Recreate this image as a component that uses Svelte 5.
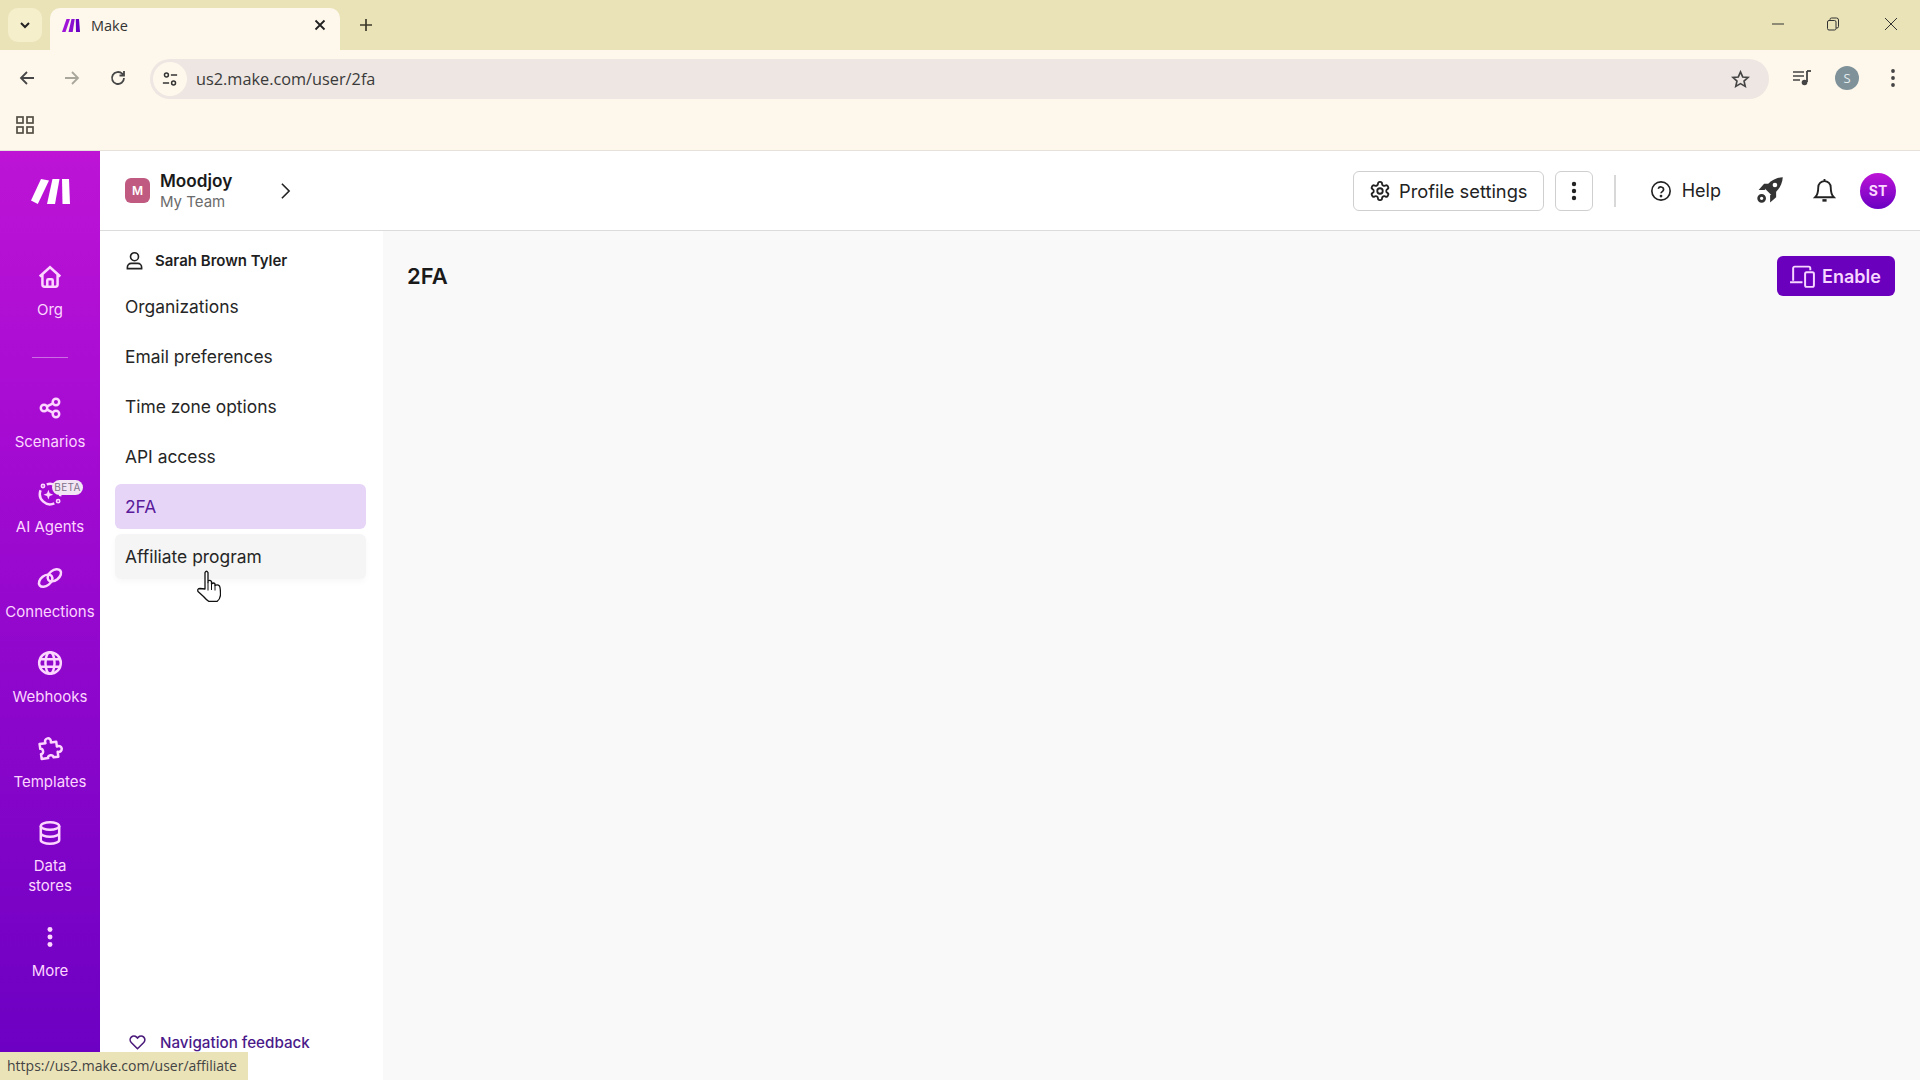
<script>
  const rail = [
    { label: 'Scenarios', svg: '<circle cx="6.5" cy="12" r="3"/><circle cx="17.5" cy="6.500" r="3"/><circle cx="17.500" cy="17.500" r="3"/><path d="M9.200 10.600l5.600-2.800M9.200 13.400l5.600 2.800"/>' },
    { label: 'AI Agents', beta: true, svg: '<path d="M3.300 9.500A9.500 9.500 0 0 0 16 21.600M9 4A9.500 9.500 0 0 1 21.300 15"/><circle cx="5.500" cy="5.500" r="1.500" stroke-width="1.500"/><circle cx="19.500" cy="19.500" r="1.500" stroke-width="1.500"/><path fill="currentColor" stroke="none" d="M10.500 9l1.200 3.300 3.300 1.200-3.300 1.200-1.200 3.300-1.200-3.300-3.300-1.200 3.300-1.200z"/>' },
    { label: 'Connections', svg: '<ellipse cx="8" cy="14.500" rx="7" ry="4.600" transform="rotate(-38 8 14.500)"/><ellipse cx="16" cy="9.500" rx="7" ry="4.600" transform="rotate(-38 16 9.500)"/>' },
    { label: 'Webhooks', svg: '<circle cx="12" cy="12" r="10"/><ellipse cx="12" cy="12" rx="4.200" ry="10"/><path d="M2.500 8.500h19M2.500 15.500h19"/>' },
    { label: 'Templates', svg: '<path transform="rotate(-8 12 12)" stroke-linejoin="round" d="M3 7h5.500c-1.500-5.500 6.500-5.500 5 0h5v4.500c5.500-1.500 5.500 6.500 0 5V21h-4.500c.5-3-5.500-3-5 0H3v-4.500c3 .5 3-5.500 0-5z"/>' },
    { label: 'Data stores', wrap: true, svg: '<ellipse cx="12" cy="5.500" rx="8.500" ry="3.500"/><path d="M3.500 5.500v13c0 1.900 3.800 3.500 8.500 3.500s8.500-1.600 8.500-3.500v-13M3.500 12c0 1.900 3.800 3.500 8.500 3.500s8.500-1.600 8.500-3.500"/>' },
    { label: 'More', svg: '<g fill="currentColor" stroke="none"><circle cx="12" cy="5" r="2.300"/><circle cx="12" cy="12" r="2.300"/><circle cx="12" cy="19" r="2.300"/></g>' }
  ];
  const menu = ['Organizations', 'Email preferences', 'Time zone options', 'API access', '2FA', 'Affiliate program'];
</script>

<div class="page">
  <div class="tabstrip">
    <div class="tabmenu">
      <svg viewBox="0 0 12 12" width="12" height="12" class="dark"><path d="M2 4l4 4 4-4" fill="none" stroke="currentColor" stroke-width="2"/></svg>
    </div>
    <div class="tab">
      <svg class="favicon" viewBox="0 0 18 13" width="18" height="13"><path fill="#a014d8" d="M4.500 0h3.500L3.500 13H0z"/><path fill="#8a0fd0" d="M9.500 0h3.200l-2 13H6.500z"/><path fill="#6a00c4" d="M13.800 0H17l1 13h-4z"/></svg>
      <span class="tabtitle">Make</span>
      <svg class="tabclose" viewBox="0 0 12 12" width="12" height="12"><path d="M1.500 1.500l9 9m0-9l-9 9" stroke="#222" stroke-width="1.800"/></svg>
    </div>
    <svg class="newtab" viewBox="0 0 14 14" width="14" height="14"><path d="M7 1v12M1 7h12" stroke="#3c3a2a" stroke-width="1.700"/></svg>
    <div class="winctl">
      <svg viewBox="0 0 14 14" width="14" height="14"><path d="M1 7h12" stroke="#333" stroke-width="1"/></svg>
      <svg viewBox="0 0 14 14" width="14" height="14"><rect x="1.500" y="3.500" width="8.500" height="9.500" rx="1.500" fill="none" stroke="#333"/><path d="M4 3.500V2.500a1.500 1.500 0 0 1 1.500-1.500h5a2 2 0 0 1 2 2v6.500a1.500 1.500 0 0 1-1.500 1.500H10" fill="none" stroke="#333"/></svg>
      <svg viewBox="0 0 14 14" width="14" height="14"><path d="M1 1l12 12m0-12L1 13" stroke="#333" stroke-width="1"/></svg>
    </div>
  </div>

  <div class="toolbar">
    <svg viewBox="0 0 18 18" width="18" height="18" class="nav-btn"><path d="M16 9H3M9 3L3 9l6 6" fill="none" stroke="#474747" stroke-width="1.800"/></svg>
    <svg viewBox="0 0 18 18" width="18" height="18" class="nav-btn"><path d="M2 9h13M9 3l6 6-6 6" fill="none" stroke="#a9a69c" stroke-width="1.800"/></svg>
    <svg viewBox="0 0 18 18" width="18" height="18" class="nav-btn"><path d="M15 9a6 6 0 1 1-1.800-4.300L15 6.500M15 2v4.500h-4.500" fill="none" stroke="#474747" stroke-width="1.800"/></svg>
    <div class="urlbar">
      <span class="tune">
        <svg viewBox="0 0 18 18" width="16" height="16"><g fill="none" stroke="#333" stroke-width="1.700"><circle cx="5" cy="4.500" r="2.200"/><path d="M10 4.500h7M1 13.500h7"/><circle cx="13" cy="13.500" r="2.200"/></g></svg>
      </span>
      <span class="urltext">us2.make.com/user/2fa</span>
      <svg class="star" viewBox="0 0 20 20" width="19" height="19"><path d="M10 2l2.300 5.300 5.700.500-4.300 3.800 1.300 5.600L10 14.300 5 17.200l1.300-5.600L2 7.800l5.700-.500z" fill="none" stroke="#444" stroke-width="1.700"/></svg>
    </div>
    <div class="tool-right">
      <svg viewBox="0 0 20 18" width="20" height="18"><path d="M1 3h11M1 7h11M1 11h7" stroke="#444" stroke-width="1.700"/><path d="M15 2v11" stroke="#444" stroke-width="1.800"/><path d="M15 2h4" stroke="#444" stroke-width="1.800"/><circle cx="12.500" cy="13.500" r="2.800" fill="#444"/></svg>
      <span class="profile">S</span>
      <svg class="chrome-dots" viewBox="0 0 6 20" width="6" height="20"><g fill="#444"><circle cx="3" cy="3" r="1.900"/><circle cx="3" cy="10" r="1.900"/><circle cx="3" cy="17" r="1.900"/></g></svg>
    </div>
  </div>

  <div class="bookmarks">
    <svg viewBox="0 0 18 18" width="18" height="18"><g fill="none" stroke="#555046" stroke-width="1.700"><rect x="1" y="1" width="6" height="6"/><rect x="11" y="1" width="6" height="6"/><rect x="1" y="11" width="6" height="6"/><rect x="11" y="11" width="6" height="6"/></g></svg>
  </div>

  <div class="app">
    <aside class="rail">
      <svg class="logo" viewBox="0 0 39 25" width="39" height="25"><g fill="#fff"><path d="M10 0l8 1.500L6.800 25 0 21.500z"/><path d="M21.500 0h7L24 25h-8z"/><path d="M31 0h7l1 25h-7.500z"/></g></svg>

      <div class="rail-item org">
        <svg class="ri" viewBox="0 0 24 24" width="26" height="26"><path d="M2.500 11.500L12 3l9.500 8.500M5 9.500V19a2 2 0 0 0 2 2h10a2 2 0 0 0 2-2V9.500M9.500 21v-6a1 1 0 0 1 1-1h3a1 1 0 0 1 1 1v6"/></svg>
        <span>Org</span>
      </div>
      <div class="rail-sep"></div>

      <div class="rail-list">
        {#each rail as r}
          <div class="rail-item">
            <svg class="ri" viewBox="0 0 24 24" width="26" height="26">{@html r.svg}</svg>
            <span class="rl" class:wrap={r.wrap}>{r.label}</span>
            {#if r.beta}<span class="beta">BETA</span>{/if}
          </div>
        {/each}
      </div>
    </aside>

    <div class="content">
      <header class="top">
        <div class="team">
          <span class="team-badge">M</span>
          <div class="team-text">
            <strong>Moodjoy</strong>
            <small>My Team</small>
          </div>
          <svg class="chev" viewBox="0 0 12 20" width="11" height="18"><path d="M2 2l8 8-8 8" fill="none" stroke="#222" stroke-width="1.800"/></svg>
        </div>
        <div class="top-right">
          <button class="btn-outline">
            <svg viewBox="0 0 24 24" width="22" height="22" fill="none" stroke="#222" stroke-width="2"><path d="M12.220 2h-.44a2 2 0 0 0-2 2v.18a2 2 0 0 1-1 1.730l-.43.25a2 2 0 0 1-2 0l-.15-.08a2 2 0 0 0-2.730.73l-.22.38a2 2 0 0 0 .73 2.730l.15.1a2 2 0 0 1 1 1.720v.51a2 2 0 0 1-1 1.740l-.15.09a2 2 0 0 0-.73 2.730l.22.38a2 2 0 0 0 2.730.73l.15-.08a2 2 0 0 1 2 0l.43.25a2 2 0 0 1 1 1.730V20a2 2 0 0 0 2 2h.44a2 2 0 0 0 2-2v-.18a2 2 0 0 1 1-1.730l.43-.25a2 2 0 0 1 2 0l.15.08a2 2 0 0 0 2.730-.73l.22-.39a2 2 0 0 0-.73-2.730l-.15-.08a2 2 0 0 1-1-1.740v-.5a2 2 0 0 1 1-1.740l.15-.09a2 2 0 0 0 .73-2.730l-.22-.38a2 2 0 0 0-2.730-.73l-.15.08a2 2 0 0 1-2 0l-.43-.25a2 2 0 0 1-1-1.730V4a2 2 0 0 0-2-2z"/><circle cx="12" cy="12" r="3"/></svg>
            Profile settings
          </button>
          <button class="btn-dots" aria-label="More">
            <svg viewBox="0 0 6 20" width="6" height="20"><g fill="#222"><circle cx="3" cy="3" r="2.200"/><circle cx="3" cy="10" r="2.200"/><circle cx="3" cy="17" r="2.200"/></g></svg>
          </button>
          <span class="vsep"></span>
          <div class="help">
            <svg viewBox="0 0 24 24" width="22" height="22" fill="none" stroke="#222" stroke-width="1.800"><circle cx="12" cy="12" r="10"/><path d="M9 9.500a3 3 0 0 1 5.800 1c0 2-2.800 2.200-2.800 4"/><circle cx="12" cy="17.500" r=".6" fill="#222"/></svg>
            <span>Help</span>
          </div>
          <svg class="rocket" viewBox="0 0 24 24" width="29" height="29"><g fill="#333"><path d="M23 1C16.500 1.500 11 5 8.300 10.500l5.200 5.200C19 13 22.500 7.500 23 1z"/><path d="M8 11.500H3L7.500 6.500h4z"/><path d="M12.500 16v6l5-4.500V12.500z"/></g><circle cx="16.500" cy="7.500" r="1.900" fill="#fff"/><circle cx="5.500" cy="18.500" r="2.500" fill="none" stroke="#333" stroke-width="2.200"/></svg>
          <svg class="bell" viewBox="0 0 24 24" width="25" height="25" fill="none" stroke="#222" stroke-width="1.800"><path d="M6 9a6 6 0 0 1 12 0c0 6 1 7.500 3 9.500H3c2-2 3-3.500 3-9.500M12 1v2"/><path d="M10 21.500h4" stroke-width="2.400"/></svg>
          <span class="avatar">ST</span>
        </div>
      </header>

      <div class="body">
        <nav class="submenu">
          <div class="user">
            <svg viewBox="0 0 20 20" width="19" height="19" fill="none" stroke="#222" stroke-width="1.700"><circle cx="10" cy="6" r="4.200"/><path d="M2.500 18.500v-1.500a4 4 0 0 1 4-4h7a4 4 0 0 1 4 4v1.500z"/></svg>
            <span>Sarah Brown Tyler</span>
          </div>
          <ul>
            {#each menu as m, i}
              <li class:active={i === 4} class:hover={i === 5}>{m}</li>
            {/each}
          </ul>
          <div class="feedback">
            <svg viewBox="0 0 20 18" width="17" height="15" fill="none" stroke="#4a1a7a" stroke-width="1.900"><path d="M10 16.500L2.500 9a4.500 4.500 0 0 1 6.400-6.400L10 3.700l1.100-1.100A4.500 4.500 0 0 1 17.500 9z"/></svg>
            <span>Navigation feedback</span>
          </div>
        </nav>
        <main class="main">
          <h1>2FA</h1>
          <button class="enable">
            <svg viewBox="0 0 26 22" width="27" height="23" fill="none" stroke="currentColor" stroke-width="1.900"><path d="M4 15V3a1.500 1.500 0 0 1 1.500-1.500H19a1.500 1.500 0 0 1 1.500 1.500v2M1 16.500h12"/><rect x="15.500" y="7" width="8.500" height="14" rx="1.500"/></svg>
            Enable
          </button>
        </main>
      </div>
    </div>
  </div>

  <div class="status">https://us2.make.com/user/affiliate</div>
  <svg class="cursor" viewBox="0 0 24 32" width="24" height="32"><path d="M8 19V2.500Q9.500 0 11 2.500V12.500V11Q13 9.500 14.500 11.500V14Q16.500 12 18 14V15.500Q20.500 14 22.500 16Q23.500 18 23.500 25Q23 29.500 20 31.500H12Q9.500 30 6.500 26.500L1 21.500Q0 18.500 3 18.500z" fill="#fff" stroke="#111" stroke-width="1.300" stroke-linejoin="round"/><path d="M14.500 14v6M18 15.500v5M11 12.500v8" stroke="#111" stroke-width="1"/></svg>
</div>

<style>
  :global(body) { margin: 0; background: #fff; }
  .page { position: relative; width: 1920px; height: 1080px; overflow: hidden; display: flex; flex-direction: column; font-family: Inter, "Liberation Sans", sans-serif; color: #1f1f1f; }

  .tabstrip { height: 50px; flex: none; background: #eae3b8; display: flex; align-items: flex-end; box-sizing: border-box; padding-left: 8px; position: relative; }
  .tabmenu { width: 34px; height: 34px; margin-bottom: 8px; border-radius: 10px; background: #f6efcc; display: flex; align-items: center; justify-content: center; }
  .dark { color: #222; }
  .tab { width: 290px; height: 42px; margin-left: 8px; background: #fef8ec; border-radius: 10px 10px 0 0; display: flex; align-items: center; box-sizing: border-box; padding: 0 14px 8px 12px; }
  .tabtitle { margin-left: 11px; font: 14.500px "Open Sans", "Noto Sans", sans-serif; color: #333; flex: 1; }
  .newtab { margin: 0 0 18px 19px; }
  .winctl { margin-left: auto; align-self: flex-start; display: flex; gap: 42px; padding: 17px 22px 0 0; }
  .winctl svg:last-child { margin-left: 2px; }
  .winctl svg:first-child { margin-right: -1px; }

  .toolbar { height: 50px; flex: none; background: #fef8ec; display: flex; align-items: center; box-sizing: border-box; padding: 0 0 0 18px; position: relative; }
  .nav-btn { margin-right: 27px; }
  .nav-btn:nth-of-type(3) { margin-left: 1px; margin-right: 24px; }
  .urlbar { width: 1619px; height: 40px; margin-top: 8px; margin-left: -1px; background: #ede6e2; border-radius: 20px; display: flex; align-items: center; box-sizing: border-box; padding: 0 19px 0 3px; }
  .toolbar > svg { margin-top: 6px; }
  .tune { width: 34px; height: 34px; border-radius: 50%; background: #fef8ec; display: flex; align-items: center; justify-content: center; }
  .urltext { margin-left: 9px; font: 16.300px "Open Sans", "Noto Sans", sans-serif; color: #3a3a3a; flex: 1; }
  .tool-right { display: flex; align-items: center; gap: 25px; margin-left: 23px; margin-top: 6px; }
  .chrome-dots { margin-left: 9px; }
  .profile { width: 24px; height: 24px; margin-left: -2px; margin-right: -3px; border-radius: 50%; background: #7f929a; color: #e4ecee; font: 13px "Open Sans", sans-serif; display: flex; align-items: center; justify-content: center; }

  .bookmarks { height: 51px; flex: none; background: #fef8ec; border-bottom: 1px solid #e6e2da; box-sizing: border-box; padding: 16px 0 0 16px; }
  .bookmarks svg { display: block; }

  .app { flex: 1; min-height: 0; display: flex; }
  .rail { width: 100px; flex: none; background: linear-gradient(180deg, #bd14d6 0%, #a60bd2 30%, #6a00c2 100%); color: #fcd6ff; display: flex; flex-direction: column; align-items: center; }
  .logo { margin: 28px 0 0 1px; flex: none; }
  .rail-item { position: relative; display: flex; flex-direction: column; align-items: center; width: 100px; }
  .rail > .rail-item { margin-top: 61px; }
  .ri { display: block; fill: none; stroke: currentColor; stroke-width: 2.300; margin-top: -1px; margin-bottom: 11px; }
  .org .ri { margin-bottom: 10px; }
  .rail-item span { font-size: 15px; line-height: 20px; text-align: center; white-space: nowrap; }
  .rail-item span.wrap { white-space: normal; width: 70px; margin-top: -1px; }
  .rail-sep { width: 36px; height: 1px; background: rgba(255,255,255,.4); margin: 37px 0 38px; flex: none; }
  .rail-list { display: flex; flex-direction: column; gap: 29px; }
  .rail-item .beta { position: absolute; left: 52px; top: -1px; width: 31px; height: 15px; border-radius: 8px; background: #f2e6f4; color: #80708a; font-size: 10px; line-height: 15px; letter-spacing: .3px; }

  .content { flex: 1; min-width: 0; display: flex; flex-direction: column; }
  .top { height: 80px; flex: none; box-sizing: border-box; border-bottom: 1px solid #dcdcdc; display: flex; align-items: center; background: #fff; }
  .team { display: flex; align-items: center; padding-left: 25px; }
  .team-badge { width: 25px; height: 25px; border-radius: 6px; background: #c05a80; color: #fff; font-size: 12px; font-weight: 600; display: flex; align-items: center; justify-content: center; }
  .team-text { display: flex; flex-direction: column; margin-left: 10px; width: 120px; }
  .team-text strong { font-size: 17.200px; font-weight: 600; line-height: 22px; color: #1a1a1a; }
  .team-text small { font-size: 15px; line-height: 20px; color: #6b6b6b; }
  .chev { flex: none; }
  .top-right { margin-left: auto; display: flex; align-items: center; padding-right: 24px; }
  .btn-outline { height: 40px; width: 191px; box-sizing: border-box; background: #fff; border: 1px solid #cfcfcf; border-radius: 6px; display: flex; align-items: center; justify-content: center; gap: 8px; font: 18.300px Inter, sans-serif; color: #222; padding: 0; }
  .btn-dots { width: 38px; height: 40px; margin-left: 11px; box-sizing: border-box; background: #fff; border: 1px solid #cfcfcf; border-radius: 6px; display: flex; align-items: center; justify-content: center; padding: 0; }
  .vsep { width: 2px; height: 32px; background: #d8d8d8; margin: 0 34px 0 21px; }
  .help { display: flex; align-items: center; gap: 10px; font-size: 18px; color: #222; }
  .rocket { margin-left: 34px; }
  .bell { margin-left: 28px; }
  .avatar { width: 36px; height: 36px; margin-left: 23px; border-radius: 50%; background: linear-gradient(180deg, #bd14d6, #6a00c2); color: #fbd6ff; font-size: 14px; font-weight: 700; display: flex; align-items: center; justify-content: center; }

  .body { flex: 1; min-height: 0; display: flex; }
  .submenu { width: 283px; flex: none; background: #fff; display: flex; flex-direction: column; position: relative; }
  .user { height: 29px; margin-top: 15px; padding-left: 25px; display: flex; align-items: center; gap: 11px; font-size: 15px; font-weight: 600; color: #1f1f1f; }
  .submenu ul { list-style: none; margin: 0; padding: 9px 0 0 15px; display: flex; flex-direction: column; gap: 5px; }
  .submenu li { width: 251px; height: 45px; box-sizing: border-box; padding-left: 10px; border-radius: 6px; font-size: 17.400px; line-height: 46px; color: #262626; }
  .submenu li.active { background: #e7d5f8; color: #5a1a9a; }
  .submenu li.hover { background: #f5f5f5; box-shadow: 0 3px 6px rgba(0,0,0,.03); }
  .feedback { margin-top: auto; padding: 0 0 28px 29px; display: flex; align-items: center; gap: 14px; font-size: 15.200px; font-weight: 500; color: #4a1a8a; }
  .main { flex: 1; background: #f9f9f9; display: flex; justify-content: space-between; align-items: flex-start; box-sizing: border-box; padding: 25px 25px 0 24px; }
  .main h1 { margin: 0; font-size: 22px; font-weight: 600; line-height: 40px; color: #1a1a1a; }
  .enable { width: 118px; height: 40px; border: 0; border-radius: 6px; background: #6a00bd; color: #f7d6ff; display: flex; align-items: center; justify-content: center; gap: 6px; font: 600 18px Inter, sans-serif; padding: 0 2px 0 0; }

  .status { position: absolute; left: 0; bottom: 0; width: 248px; height: 28px; box-sizing: border-box; padding-left: 7px; background: #eae3b8; font: 14px/28px "Open Sans", "Noto Sans", sans-serif; color: #444; white-space: nowrap; overflow: hidden; }
  .cursor { position: absolute; left: 197px; top: 570px; }
</style>
